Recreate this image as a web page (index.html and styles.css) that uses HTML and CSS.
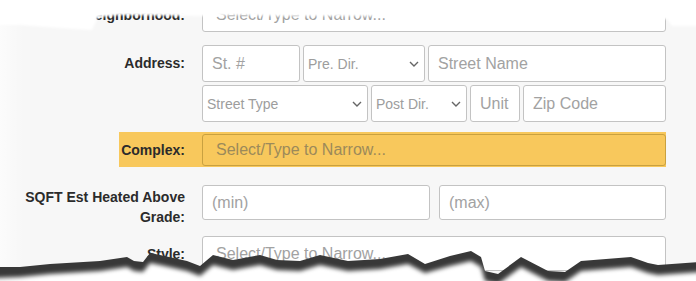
FILE: index.html
```html
<!DOCTYPE html>
<html>
<head>
    <meta charset="UTF-8">
    <title>Search Form</title>
    <link rel="stylesheet" href="styles.css">
</head>
<body>
    <div class="form">
        <div class="row row-neigh">
            <label class="lbl">Neighborhood:</label>
            <input class="fld wide" placeholder="Select/Type to Narrow...">
        </div>

        <div class="row row-addr">
            <label class="lbl">Address:</label>
            <div class="addr">
                <div class="addr-line one">
                    <input class="fld" placeholder="St. #">
                    <select class="fld sel"><option>Pre. Dir.</option></select>
                    <input class="fld" placeholder="Street Name">
                </div>
                <div class="addr-line two">
                    <select class="fld sel"><option>Street Type</option></select>
                    <select class="fld sel"><option>Post Dir.</option></select>
                    <input class="fld" placeholder="Unit">
                    <input class="fld" placeholder="Zip Code">
                </div>
            </div>
        </div>

        <div class="row row-hl">
            <label class="lbl">Complex:</label>
            <input class="fld wide" placeholder="Select/Type to Narrow...">
        </div>

        <div class="row row-sqft">
            <label class="lbl lbl-top">SQFT Est Heated Above Grade:</label>
            <div class="range">
                <input class="fld" placeholder="(min)">
                <input class="fld" placeholder="(max)">
            </div>
        </div>

        <div class="row row-style">
            <label class="lbl">Style:</label>
            <input class="fld wide" placeholder="Select/Type to Narrow...">
        </div>
    </div>

    <!-- torn paper edges of the screenshot -->
    <svg class="paper-edge" width="696" height="281" viewBox="0 0 696 281">
        <defs>
            <filter id="soft" x="-5%" y="-50%" width="110%" height="200%">
                <feGaussianBlur stdDeviation="2.2"/>
            </filter>
            <filter id="soft1" x="-5%" y="-50%" width="110%" height="200%">
                <feGaussianBlur stdDeviation="1.2"/>
            </filter>
            <linearGradient id="fadeLeft" x1="0" x2="1" y1="0" y2="0">
                <stop offset="0" stop-color="#fff" stop-opacity="0.6"/>
                <stop offset="1" stop-color="#fff" stop-opacity="0"/>
            </linearGradient>
        </defs>
        <rect x="0" y="0" width="24" height="281" fill="url(#fadeLeft)"/>
        <path filter="url(#soft1)" fill="#fff" d="M-10,-10 L706,-10 L706,26 L672,26 L667,19 L600,17 L480,16 L350,16 L280,16 L240,15 L200,16 L120,15 L98,17 L92,30 L60,28 L20,25 L-10,25 Z"/>
        <path fill="#383838" d="M-5,267 L20,267 L50,264 L100,261 L127,257 L134,261 L143,262 L150,253 L160,255 L187,261 L200,266 L213,255 L233,260 L260,255 L277,260 L300,261 L320,255 L348,261 L380,259 L408,254 L425,264 L450,256 L471,251 L481,257 L485,271 L498,274 L521,257 L548,271 L565,272 L581,261 L631,257 L648,263 L658,265 L700,262 L700,290 L-5,290 Z"/>
        <path filter="url(#soft)" fill="#fff" d="M-5,278 L20,277 L50,274 L100,271 L127,267 L134,271 L143,272 L150,263 L160,265 L187,271 L200,276 L213,265 L233,270 L260,265 L277,270 L300,271 L320,265 L348,271 L380,269 L408,264 L425,273 L450,266 L471,261 L481,267 L485,281 L498,284 L521,267 L548,281 L565,282 L581,271 L631,267 L648,273 L658,275 L700,272 L700,295 L-5,295 Z"/>
    </svg>
</body>
</html>
```

FILE: styles.css
```css
body {
    margin: 0;
    background-color: #f7f7f7;
    font-family: "Liberation Sans", Arial, sans-serif;
    overflow: hidden;
}
.form {
    width: 666px;
    margin-top: -3px;
}
.row {
    display: grid;
    grid-template-columns: 185px 1fr;
    column-gap: 17px;
    align-items: center;
}
.row-addr {
    margin-top: 13px;
}
.row-hl {
    margin-top: 10px;
    padding: 2px 0 1px;
    background: linear-gradient(to right, transparent 119px, #f8c85c 119px);
}
.row-sqft {
    margin-top: 18px;
    grid-template-rows: 35px;
}
.row-style {
    margin-top: 16px;
}
.lbl {
    font-size: 14px;
    font-weight: bold;
    line-height: 20px;
    color: #2b2b2b;
    text-align: right;
}
.row-addr .lbl {
    align-self: start;
    padding-top: 8px;
}
.lbl-top {
    align-self: start;
    padding-top: 2px;
}
.fld {
    box-sizing: border-box;
    width: 100%;
    height: 37px;
    margin: 0;
    padding: 0 9px;
    border: 1px solid #c3c3c3;
    border-radius: 3px;
    background-color: #fff;
    font-family: "Liberation Sans", Arial, sans-serif;
    font-size: 16px;
    color: #555;
    outline: none;
}
.fld::placeholder {
    color: #a2a2a2;
}
.wide {
    height: 35px;
    padding-left: 13px;
}
.row-hl .fld {
    height: 32px;
    background-color: transparent;
    border-color: #c9a140;
}
.row-hl .fld::placeholder {
    color: #9c8a5a;
}
.sel {
    appearance: none;
    -webkit-appearance: none;
    padding: 0 18px 0 4px;
    font-size: 14px;
    color: #9d9d9d;
    background-image: url("data:image/svg+xml,%3Csvg xmlns='http://www.w3.org/2000/svg' width='10' height='6' viewBox='0 0 10 6'%3E%3Cpath d='M1 1l4 4 4-4' fill='none' stroke='%23666' stroke-width='1.4'/%3E%3C/svg%3E");
    background-repeat: no-repeat;
    background-position: right 5px center;
}
.addr {
    display: flex;
    flex-direction: column;
    gap: 3px;
}
.addr-line {
    display: grid;
    gap: 3px;
}
.addr-line.one {
    grid-template-columns: 98px 122px 1fr;
}
.addr-line.two {
    grid-template-columns: 166px 96px 50px 1fr;
}
.range {
    display: grid;
    grid-template-columns: 228px 1fr;
    gap: 9px;
}
.range .fld {
    height: 35px;
}
.paper-edge {
    position: absolute;
    left: 0;
    top: 0;
    pointer-events: none;
}
```
